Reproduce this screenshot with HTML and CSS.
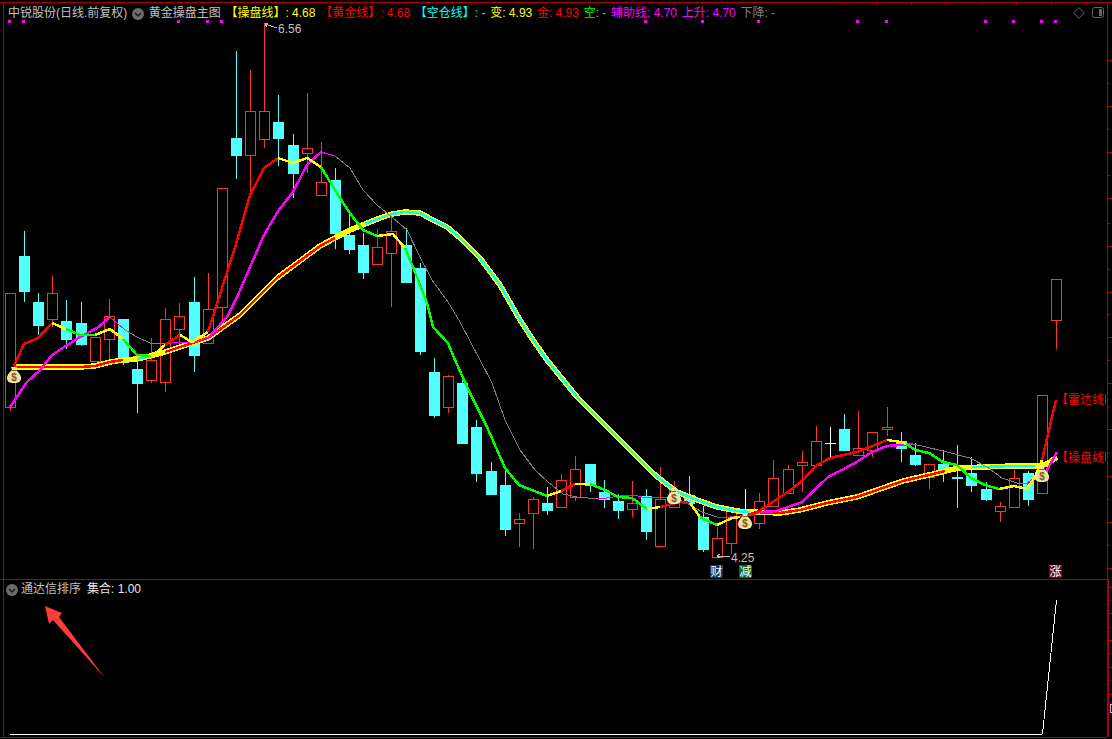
FILE: index.html
```html
<!DOCTYPE html>
<html lang="zh-CN">
<head>
<meta charset="utf-8">
<title>中锐股份 日线</title>
<link rel="stylesheet" href="styles.css">
</head>
<body>
<main class="terminal">
  <section class="pane pane-main">
    <svg class="plot" width="1112" height="579" viewBox="0 0 1112 579">
      <defs>
        <symbol id="bag" viewBox="0 0 14 16">
          <path class="bag-glow" d="M4 0h6l-1 3 1 1c2 2 4 4 4 7 0 3-2 5-7 5s-7-2-7-5c0-3 2-5 4-7l1-1z"/>
          <path class="bag-body" d="M5 1h4l-1 2.500 1 1c2 2 4 3.500 4 6.500 0 2.500-2 4-6 4s-6-1.500-6-4c0-3 2-4.500 4-6.500l1-1z"/>
          <path class="bag-knot" d="M5 3.500h4"/>
          <text class="bag-sign" x="7" y="13.500">$</text>
        </symbol>
      </defs>

      <path class="axis" d="M0 2.500H1112M3.500 2V579M1107.500 2V579"/>
      <path class="axis" d="M842.500 3v2M876.500 3v2M911.500 3v2M946.500 3v2M981.500 3v2M1016.500 3v2M1051.500 3v2M1086.500 3v2"/>
      <path class="axis" d="M1108 60.500h4M1108 83.500h2M1108 106.500h4M1108 129.500h2M1108 152.500h4M1108 175.500h2M1108 198.500h4M1108 223.500h2M1108 246.500h4M1108 269.500h2M1108 292.500h4M1108 314.500h2M1108 337.500h4M1108 360.500h2M1108 383.500h4M1108 406.500h2M1108 429.500h4M1108 453.500h2M1108 476.500h4M1108 499.500h2M1108 522.500h4M1108 545.500h2M1108 568.500h4"/>

      <g class="marks">
        <rect x="8" y="20" width="3" height="3"/><rect x="22" y="20" width="3" height="3"/><rect x="177" y="20" width="3" height="3"/><rect x="206" y="20" width="3" height="3"/><rect x="220" y="20" width="3" height="3"/><rect x="644" y="20" width="3" height="3"/><rect x="701" y="20" width="3" height="3"/><rect x="757" y="20" width="3" height="3"/><rect x="856" y="20" width="3" height="3"/><rect x="885" y="20" width="3" height="3"/><rect x="984" y="20" width="3" height="3"/><rect x="1012" y="20" width="3" height="3"/><rect x="1040" y="20" width="3" height="3"/><rect x="1054" y="20" width="3" height="3"/>
      </g>

      <g class="up">
        <path d="M10.500 407V411M5.500 293.500h10V407.500h-10z"/>
        <path d="M52.500 276V293M52.500 319V327M47.500 293.500h10V319.500h-10z"/>
        <path d="M90.500 337.500h10V361.500h-10z"/>
        <path d="M109.500 299V316M109.500 339V360M104.500 316.500h10V339.500h-10z"/>
        <path d="M151.500 338V360M151.500 380V383M146.500 360.500h10V380.500h-10z"/>
        <path d="M165.500 308V319M165.500 382V392M160.500 319.500h10V382.500h-10z"/>
        <path d="M179.500 303V316M179.500 329V345M174.500 316.500h10V329.500h-10z"/>
        <path d="M208.500 273V309M203.500 309.500h10V343.500h-10z"/>
        <path d="M222.500 307V330M217.500 188.500h10V307.500h-10z"/>
        <path d="M250.500 70V111M250.500 155V195M245.500 111.500h10V155.500h-10z"/>
        <path d="M264.500 23V111M264.500 139V148M259.500 111.500h10V139.500h-10z"/>
        <path d="M307.500 93V148M307.500 153V173M302.500 148.500h10V153.500h-10z"/>
        <path d="M321.500 142V182M316.500 182.500h10V195.500h-10z"/>
        <path d="M377.500 229V247M377.500 264V265M372.500 247.500h10V264.500h-10z"/>
        <path d="M391.500 217V231M391.500 253V307M386.500 231.500h10V253.500h-10z"/>
        <path d="M448.500 375V376M448.500 407V413M443.500 376.500h10V407.500h-10z"/>
        <path d="M519.500 513V519M519.500 523V547M514.500 519.500h10V523.500h-10z"/>
        <path d="M533.500 497V499M533.500 513V549M528.500 499.500h10V513.500h-10z"/>
        <path d="M561.500 474V480M556.500 480.500h10V507.500h-10z"/>
        <path d="M575.500 456V469M575.500 497V501M570.500 469.500h10V497.500h-10z"/>
        <path d="M632.500 481V503M632.500 509V517M627.500 503.500h10V509.500h-10z"/>
        <path d="M660.500 467V499M655.500 499.500h10V546.500h-10z"/>
        <path d="M674.500 481V490M669.500 490.500h10V507.500h-10z"/>
        <path d="M717.500 527V538M712.500 538.500h10V557.500h-10z"/>
        <path d="M731.500 543V554M726.500 508.500h10V543.500h-10z"/>
        <path d="M759.500 493V501M759.500 523V529M754.500 501.500h10V523.500h-10z"/>
        <path d="M773.500 460V478M768.500 478.500h10V506.500h-10z"/>
        <path d="M788.500 465V469M783.500 469.500h10V493.500h-10z"/>
        <path d="M802.500 451V462M802.500 465V492M797.500 462.500h10V465.500h-10z"/>
        <path d="M816.500 426V441M811.500 441.500h10V465.500h-10z"/>
        <path d="M858.500 411V448M853.500 448.500h10V455.500h-10z"/>
        <path d="M872.500 450V457M867.500 432.500h10V450.500h-10z"/>
        <path d="M887.500 407V427M887.500 429V436M882.500 427.500h10V429.500h-10z"/>
        <path d="M929.500 477V489M924.500 464.500h10V477.500h-10z"/>
        <path d="M1000.500 502V506M1000.500 511V522M995.500 506.500h10V511.500h-10z"/>
        <path d="M1014.500 470V478M1009.500 478.500h10V507.500h-10z"/>
        <path d="M1037.500 395.500h10V493.500h-10z"/>
        <path d="M1056.500 320V349M1051.500 279.500h10V320.500h-10z"/>
      </g>

      <g class="down">
        <path d="M24.500 231V302M19.500 256.500h10V291.500h-10z"/>
        <path d="M38.500 293V335M33.500 302.500h10V325.500h-10z"/>
        <path d="M66.500 300V349M61.500 321.500h10V339.500h-10z"/>
        <path d="M81.500 302V346M76.500 323.500h10V344.500h-10z"/>
        <path d="M123.500 319V365M118.500 319.500h10V362.500h-10z"/>
        <path d="M137.500 361V413M132.500 369.500h10V383.500h-10z"/>
        <path d="M194.500 277V372M189.500 302.500h10V355.500h-10z"/>
        <path d="M236.500 51V179M231.500 138.500h10V155.500h-10z"/>
        <path d="M278.500 95V166M273.500 122.500h10V138.500h-10z"/>
        <path d="M293.500 134V198M288.500 145.500h10V173.500h-10z"/>
        <path d="M335.500 168V249M330.500 180.500h10V233.500h-10z"/>
        <path d="M349.500 210V254M344.500 235.500h10V249.500h-10z"/>
        <path d="M363.500 233V279M358.500 245.500h10V272.500h-10z"/>
        <path d="M406.500 228V282M401.500 245.500h10V282.500h-10z"/>
        <path d="M420.500 263V355M415.500 268.500h10V351.500h-10z"/>
        <path d="M434.500 358V418M429.500 372.500h10V415.500h-10z"/>
        <path d="M462.500 380V443M457.500 383.500h10V443.500h-10z"/>
        <path d="M476.500 420V482M471.500 427.500h10V473.500h-10z"/>
        <path d="M491.500 462V494M486.500 471.500h10V494.500h-10z"/>
        <path d="M505.500 470V536M500.500 485.500h10V529.500h-10z"/>
        <path d="M547.500 487V515M542.500 503.500h10V510.500h-10z"/>
        <path d="M590.500 464V492M585.500 464.500h10V485.500h-10z"/>
        <path d="M604.500 480V508M599.500 492.500h10V499.500h-10z"/>
        <path d="M618.500 494V519M613.500 501.500h10V510.500h-10z"/>
        <path d="M646.500 489V540M641.500 496.500h10V531.500h-10z"/>
        <path d="M689.500 476V503M684.500 495.500h10V503.500h-10z"/>
        <path d="M703.500 506V552M698.500 517.500h10V549.500h-10z"/>
        <path d="M844.500 414V450M839.500 429.500h10V450.500h-10z"/>
        <path d="M901.500 432V462M896.500 441.500h10V448.500h-10z"/>
        <path d="M915.500 443V466M910.500 455.500h10V464.500h-10z"/>
        <path d="M943.500 450V482M938.500 464.500h10V472.500h-10z"/>
        <path d="M971.500 457V492M966.500 473.500h10V485.500h-10z"/>
        <path d="M986.500 482V501M981.500 489.500h10V499.500h-10z"/>
        <path d="M1028.500 471V506M1023.500 473.500h10V499.500h-10z"/>
        <path d="M957.500 445V508M952 477h11M952 478h11"/>
      </g>
      <path class="flat" d="M745.500 489V515M830.500 427V457M825 443.500h11"/>

      <!-- long average: outer band and coloured core -->
      <polyline class="band" points="14,367 80,367 95,366 110,362 123,360 137,359 150,356 165,352 180,347 208,338 240,315 277,278 320,246 350,230 365,224 380,218 392,214 405,212 420,213 433,220 447,227 460,238 480,258 500,285 520,320 535,343 547,360 577,397 620,440 653,473 660,479 677,492 697,500 717,507 737,511 750,512 780,513 800,510 827,503 857,497 880,489 903,481 933,474 950,470 960,468 983,467 1013,466 1037,466 1047,464 1057,457"/>
      <polyline class="core-red" points="14,367 80,367 95,366 110,362 123,360"/>
      <polyline class="core-cyan" points="137,359 150,356"/>
      <polyline class="core-red" points="165,352 180,347 208,338 240,315 277,278 320,246 335,238"/>
      <polyline class="core-cyan" points="365,224 380,218 392,214 405,212 420,213 433,220 447,227 460,238 480,258 500,285 520,320 535,343 547,360 577,397 620,440 653,473 660,479 677,492 697,500 717,507 737,511 750,512"/>
      <polyline class="core-red" points="760,513 780,513 800,510 827,503 857,497 880,489 903,481 933,474 945,471"/>
      <polyline class="core-cyan" points="972,467 983,467 1013,466 1035,466"/>

      <!-- auxiliary line -->
      <polyline class="aux" points="10,407 27,382 40,370 52,355 80,337 97,328 110,317"/>
      <polyline class="aux-thin" points="110,317 125,330"/>
      <polyline class="mid-thin" points="125,330 137,337 150,343 165,344"/>
      <polyline class="aux-thin" points="165,344 180,342 194,343 209,337"/>
      <polyline class="aux" points="209,337 227,317 238,295 263,237 278,211 293,192 307,165 321,152"/>
      <polyline class="aux-thin" points="321,152 335,156"/>
      <polyline class="mid-thin" points="335,156 350,168 363,190 377,205 393,218 407,230 420,257 432,280 448,302 460,322 480,360 492,383 505,420 520,450 535,470 548,482 563,494 577,497 598,499"/>
      <polyline class="aux-thin" points="598,499 607,498 620,496 633,495 647,498 667,497"/>
      <polyline class="mid-thin" points="680,500 690,505 702,512 717,517"/>
      <polyline class="aux-thin" points="717,517 730,517 750,515"/>
      <polyline class="aux" points="750,515 760,512 777,511 802,502 828,477 857,462 870,453 887,446 913,444"/>
      <polyline class="mid-thin" points="913,444 943,451 970,458 987,467 1002,478 1017,483 1027,484"/>
      <polyline class="aux" points="1027,484 1033,480 1047,470 1057,452"/>

      <!-- trading line, coloured by state -->
      <polyline class="t-red" points="14,366 24,344 38,338 52,323"/>
      <polyline class="t-yellow" points="52,323 66,329"/>
      <polyline class="t-green" points="66,329 80,335 95,335"/>
      <polyline class="t-yellow" points="95,335 110,329 123,339"/>
      <polyline class="t-green" points="123,339 137,355 151,356"/>
      <polyline class="t-yellow" points="151,357 165,345"/>
      <polyline class="t-red" points="165,345 180,335"/>
      <polyline class="t-yellow" points="180,335 192,342 208,332"/>
      <polyline class="t-red" points="208,332 222,288 236,244 250,195 264,168 278,158"/>
      <polyline class="t-yellow" points="278,158 293,163 307,158 321,167"/>
      <polyline class="t-green" points="321,167 335,190 349,212 363,230 377,236"/>
      <polyline class="t-yellow" points="377,236 393,234 405,248"/>
      <polyline class="t-green" points="405,248 413,267 427,303 433,327 448,343 455,360 470,393 487,427 505,468 519,485 547,496"/>
      <polyline class="t-yellow" points="547,496 561,491"/>
      <polyline class="t-red" points="561,491 575,484"/>
      <polyline class="t-yellow" points="575,484 590,484"/>
      <polyline class="t-green" points="590,484 605,490 618,497 632,498 647,509"/>
      <polyline class="t-yellow" points="647,509 660,507"/>
      <polyline class="t-red" points="660,507 680,502 690,503"/>
      <polyline class="t-yellow" points="690,503 700,517"/>
      <polyline class="t-green" points="700,517 703,519 717,525"/>
      <polyline class="t-yellow" points="717,525 732,518 740,517"/>
      <polyline class="t-red" points="740,517 757,512 773,502 788,492 803,480 817,465 830,458 857,452 880,443 887,440"/>
      <polyline class="t-yellow" points="887,440 901,442 906,444"/>
      <polyline class="t-green" points="906,444 915,450 929,453 943,462 957,465 971,478 985,485 999,489"/>
      <polyline class="t-yellow" points="999,489 1014,486 1027,489"/>
      <polyline class="t-yellow" points="1027,489 1035,477 1042,460"/>
      <polyline class="t-red" points="1042,460 1056,400"/>

      <use href="#bag" x="7" y="367" width="14" height="16"/>
      <use href="#bag" x="667" y="488" width="14" height="16"/>
      <use href="#bag" x="738" y="513" width="14" height="16"/>
      <use href="#bag" x="1035" y="466" width="14" height="16"/>

      <path class="note-line" d="M265 24l12 4M265 24l3-1M265 24l2 3M717 556h13M717 556l3-2M717 556l3 2"/>
      <text class="note" x="278" y="33">6.56</text>
      <text class="note" x="731" y="562">4.25</text>

      <text class="tag" x="1056" y="404">【雷达线</text>
      <text class="tag" x="1056" y="462">【操盘线</text>
      <path class="tag-end" d="M1105.500 394v10M1105.500 452v10"/>

      <rect class="chip chip-blue" x="710" y="565" width="13" height="13"/>
      <rect class="chip chip-green" x="739" y="565" width="13" height="13"/>
      <rect class="chip chip-red" x="1049" y="565" width="13" height="13"/>
      <text class="chip-text" x="716.500" y="576">财</text>
      <text class="chip-text" x="745.500" y="576">减</text>
      <text class="chip-text" x="1055.500" y="576">涨</text>
    </svg>

    <header class="legend">
      <span class="t-gray">中锐股份(日线.前复权)</span>
      <svg class="drop" width="12" height="12" viewBox="0 0 12 12"><circle class="drop-bg" cx="6" cy="6" r="6"/><path class="drop-mark" d="M3 5l3 3 3-3"/></svg>
      <span class="t-gray">黄金操盘主图</span>
      <span class="c-yellow">【操盘线】: 4.68</span>
      <span class="c-red">【黄金线】: 4.68</span>
      <span class="c-cyan">【空仓线】: -</span>
      <span class="c-yellow">变: 4.93</span>
      <span class="c-red">金: 4.93</span>
      <span class="c-green">空: -</span>
      <span class="c-magenta">辅助线: 4.70</span>
      <span class="c-magenta">上升: 4.70</span>
      <span class="c-dim">下降: -</span>
    </header>

    <div class="tools">
      <svg width="12" height="12" viewBox="0 0 12 12"><path class="tool" d="M6 .7L11.300 6 6 11.300.7 6z"/></svg>
      <svg width="12" height="12" viewBox="0 0 12 12"><rect class="tool" x=".5" y=".5" width="11" height="10" rx="2"/><rect class="tool-fill" x="7" y="2" width="3" height="7"/></svg>
    </div>
  </section>

  <section class="pane pane-sub">
    <svg class="plot" width="1112" height="160" viewBox="0 579 1112 160">
      <path class="axis" d="M0 579.500H1107M3.500 579V737M1107 579V737M1108 579V737M0 737.500H1107"/>
      <path class="axis" d="M1109 587.500h3M1109 600.500h2M1109 613.500h3M1109 627.500h2M1109 640.500h3M1109 653.500h2M1109 667.500h3M1109 680.500h2M1109 694.500h3"/>
      <rect class="scale-box" x="1109" y="701" width="3" height="15"/>
      <rect class="scale-inner" x="1110.500" y="704.500" width="2" height="8"/>
      <path class="signal" d="M10 734.500H1042"/>
      <polyline class="signal" points="1042.500,734 1056.500,600"/>
      <path class="pointer" d="M45 606L62 613 59 617 105 678 53 620 49 624z"/>
    </svg>
    <header class="legend legend-sub">
      <svg class="drop" width="12" height="12" viewBox="0 0 12 12"><circle class="drop-bg" cx="6" cy="6" r="6"/><path class="drop-mark" d="M3 5l3 3 3-3"/></svg>
      <span class="t-gray">通达信排序</span>
      <span class="t-light">集合: 1.00</span>
    </header>
  </section>
</main>
</body>
</html>
```
FILE: styles.css
```css
html, body {
  margin: 0;
  padding: 0;
  background: #000;
}

.terminal {
  display: flex;
  flex-direction: column;
  width: 1112px;
  height: 739px;
  overflow: hidden;
  background: #000;
  font-family: "Liberation Sans", "Noto Sans CJK SC", sans-serif;
  font-size: 12px;
}

.pane {
  position: relative;
  flex: none;
}

.pane-main { height: 579px; }
.pane-sub { height: 160px; }

.plot {
  display: block;
  shape-rendering: crispEdges;
}

.legend {
  position: absolute;
  top: 5px;
  left: 8px;
  display: flex;
  align-items: center;
  gap: 4.7px;
  height: 17px;
  line-height: 17px;
  white-space: nowrap;
}

.legend-sub {
  top: 2px;
  left: 6px;
  gap: 3px;
}

.legend-sub .t-light { margin-left: 3px; }

.tools {
  position: absolute;
  top: 7px;
  left: 1073px;
  display: flex;
  gap: 7px;
}

.t-gray { color: #c0c0c0; }
.t-light { color: #e8e8e8; }
.c-yellow { color: #ffff00; }
.c-red { color: #ff0000; }
.c-cyan { color: #00ffff; }
.c-green { color: #00ff00; }
.c-magenta { color: #ff00ff; }
.c-dim { color: #808080; }

.drop-bg { fill: #6c6c6c; }
.drop-mark { fill: none; stroke: #1c1c1c; stroke-width: 1.5; }

.tool { fill: none; stroke: #666; }
.tool-fill { fill: #666; }

.axis { fill: none; stroke: #b00000; stroke-width: 1; }
.marks rect { fill: #ff00ff; }

.up path { fill: #000; stroke: #ff3232; stroke-width: 1; }
.down path { fill: #54ffff; stroke: #54ffff; stroke-width: 1; }
.flat { fill: none; stroke: #fff; stroke-width: 1; }

polyline { fill: none; stroke-linejoin: round; }

.band { stroke: #ffff00; stroke-width: 5.5; }
.core-red { stroke: #ff0000; stroke-width: 2.5; }
.core-cyan { stroke: #00ffff; stroke-width: 2.5; }
.aux { stroke: #ff00ff; stroke-width: 2.5; }
.aux-thin { stroke: #ff00ff; stroke-width: 1; }
.mid-thin { stroke: #808080; stroke-width: 1; }
.t-red { stroke: #ff0000; stroke-width: 2.5; }
.t-yellow { stroke: #ffff00; stroke-width: 2.5; }
.t-green { stroke: #00ff00; stroke-width: 2.5; }

.bag-glow { fill: #fff6a8; shape-rendering: auto; }
.bag-body { fill: #f0dca0; shape-rendering: auto; }
.bag-knot { fill: none; stroke: #8a5a20; stroke-width: 1; }
.bag-sign {
  fill: #8a5414;
  font-family: "Liberation Sans", sans-serif;
  font-size: 10px;
  font-weight: 700;
  text-anchor: middle;
}

.note-line { fill: none; stroke: #c0c0c0; stroke-width: 1; }
.note { fill: #c0c0c0; font-size: 12px; }
.tag { fill: #ff0000; font-size: 12px; }
.tag-end { fill: none; stroke: #ff0000; stroke-width: 1; }

.chip-blue { fill: #0a3c6e; }
.chip-green { fill: #0a6a20; }
.chip-red { fill: #780808; }
.chip-text { fill: #fff; font-size: 12px; text-anchor: middle; }

.scale-box { fill: #000080; }
.scale-inner { fill: none; stroke: #c0c0c0; stroke-width: 1; }
.signal { fill: none; stroke: #fff; stroke-width: 1; }
.pointer { fill: #ff3c3c; shape-rendering: auto; }
```
